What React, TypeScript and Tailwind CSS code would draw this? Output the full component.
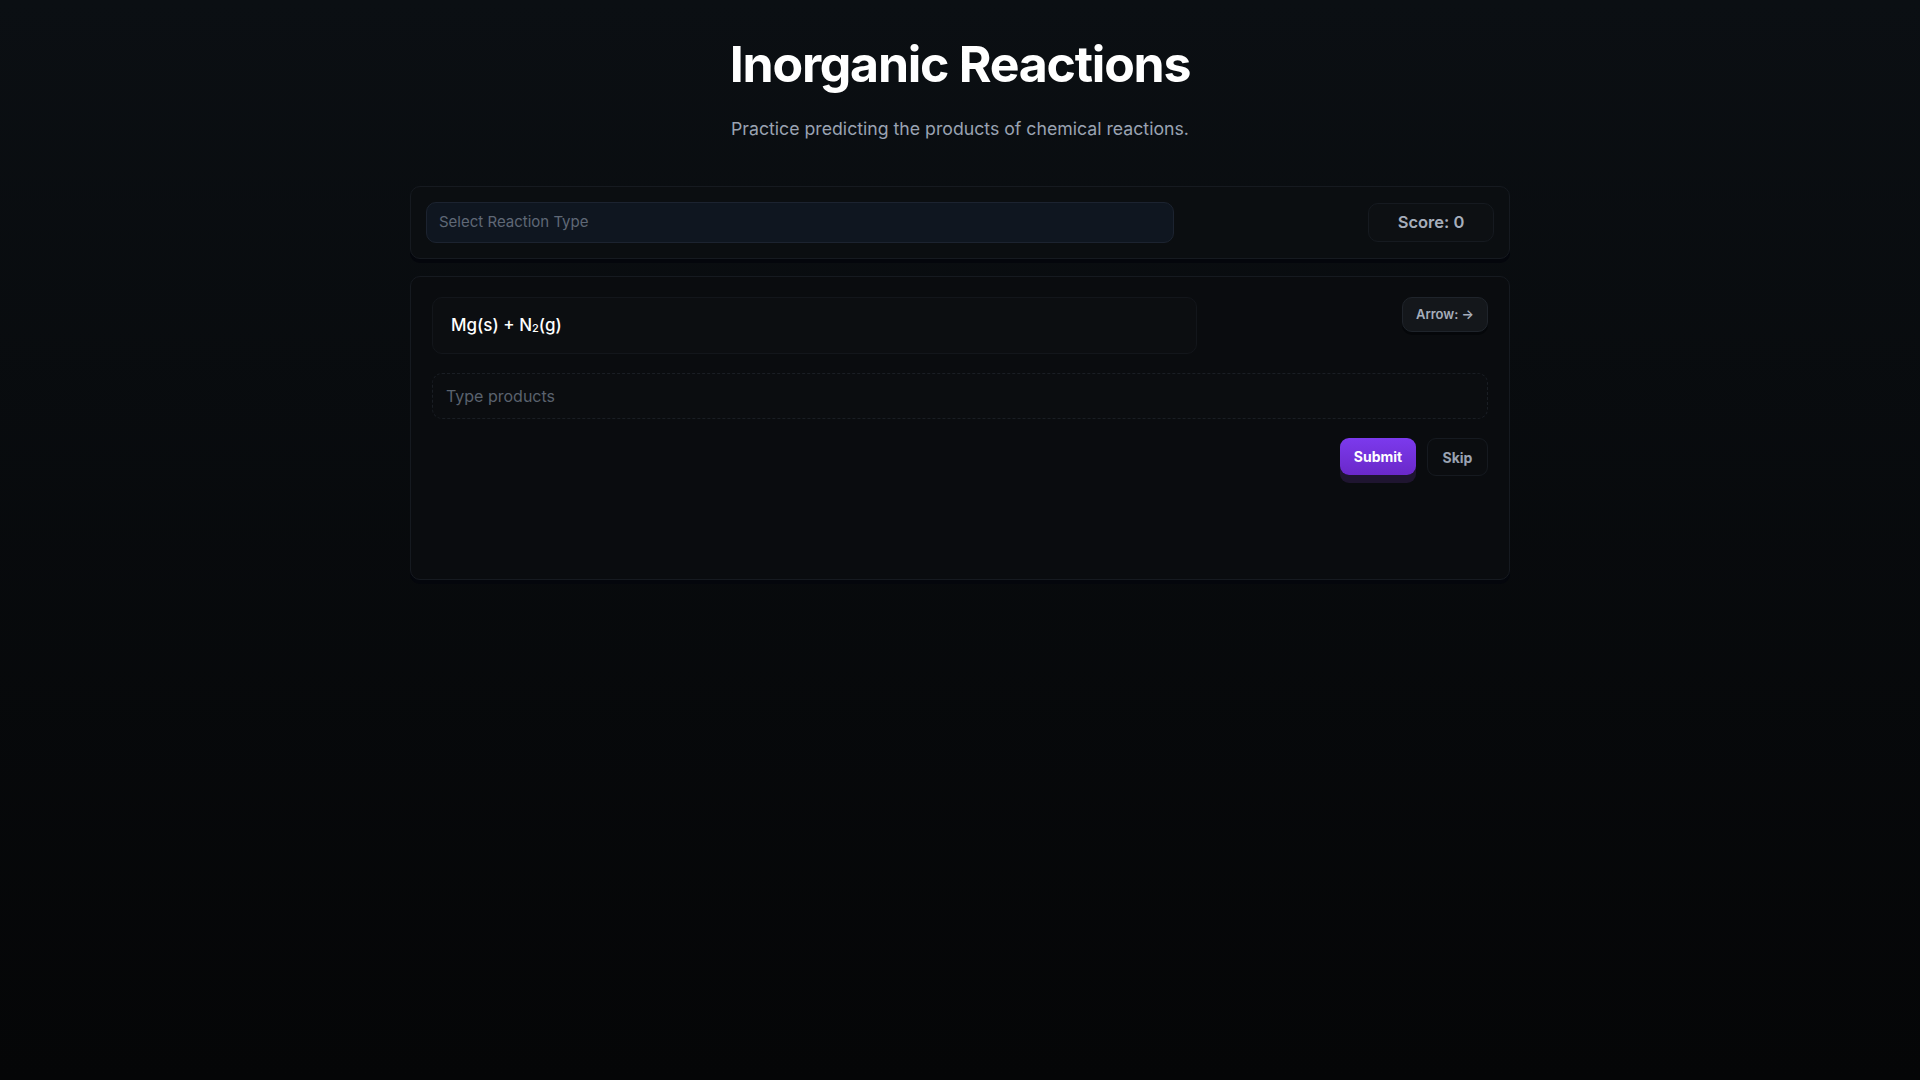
export default function App() {
  return (
    <div className="min-h-screen w-full bg-gradient-to-b from-[#0b0f13] to-[#050607] text-white" style={{ fontFamily: "Inter, 'Noto Sans', sans-serif" }}>
      <div className="mx-auto flex w-[1100px] flex-col items-center pt-[34px]">
        <h1 className="text-[50px] font-bold leading-[60px] tracking-tight text-white">Inorganic Reactions</h1>
        <p className="mt-[21px] text-[17.7px] leading-[28px] text-[#9aa3b2]">Practice predicting the products of chemical reactions.</p>

        <div className="mt-[43px] flex w-full items-center justify-between rounded-[10px] border border-[#161a20] bg-[#0b0e11] px-[15px] py-[15px] shadow-[0_4px_0_#04060c]">
          <div className="flex h-[41px] w-[748px] items-center rounded-[10px] border border-[#1c2330] bg-[#0f1620] px-[12px] text-[15px] text-[#5f6876]">Select Reaction Type</div>
          <div className="flex h-[39px] w-[126px] items-center justify-center rounded-[10px] border border-[#161a20] bg-[#0d1013] text-[16.5px] font-semibold text-[#a6aebb]">Score: 0</div>
        </div>

        <div className="mt-[17px] flex h-[304px] w-full flex-col rounded-[10px] border border-[#161a20] bg-[#0a0c0f] px-[21px] pt-[20px] shadow-[0_4px_0_#04060c]">
          <div className="flex items-start justify-between">
            <div className="flex h-[57px] w-[765px] items-center rounded-[10px] border border-[#13161b] bg-[#0c0e11] px-[18px] text-[17px] font-medium text-white">
              Mg(s) + N<sub className="text-[11px]">2</sub>(g)
            </div>
            <div className="flex h-[35px] w-[86px] items-center justify-center rounded-[10px] border border-[#1f242b] bg-[#14171b] text-[13px] font-semibold text-[#a6aebb] shadow-[0_3px_0_#05070a]">Arrow: →</div>
          </div>
          <div className="mt-[19px] flex h-[46px] w-full items-center rounded-[10px] border border-dashed border-[#1a1e24] bg-[#0b0d10] px-[13px] text-[16px] text-[#5a626e]">Type products</div>
          <div className="mt-[19px] flex justify-end gap-[11px]">
            <div className="flex h-[37px] w-[76px] items-center justify-center rounded-[9px] bg-gradient-to-b from-[#7c3aed] to-[#6a28c9] text-[14px] font-bold text-white shadow-[0_8px_0_#1f1530]">Submit</div>
            <div className="flex h-[38px] w-[61px] items-center justify-center rounded-[9px] border border-[#161a20] bg-[#0b0d10] text-[14px] font-bold text-[#9aa3b2]">Skip</div>
          </div>
        </div>
      </div>
    </div>
  );
}
